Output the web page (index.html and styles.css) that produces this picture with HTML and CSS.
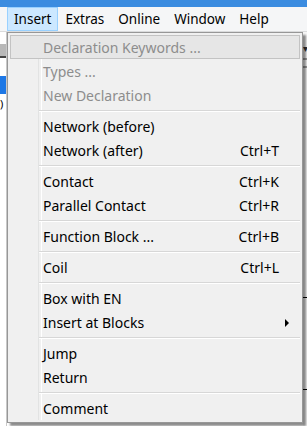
FILE: index.html
```html
<!DOCTYPE html>
<html lang="en">
<head>
  <meta charset="UTF-8" />
  <title>Insert menu</title>
  <link rel="stylesheet" href="styles.css">
</head>
<body>
  <div class="window">
    <div class="titlebar"></div>
    <div class="menubar">
      <span class="menubar-item active">Insert</span>
      <span class="menubar-item">Extras</span>
      <span class="menubar-item">Online</span>
      <span class="menubar-item">Window</span>
      <span class="menubar-item">Help</span>
    </div>

    <div class="workspace">
      <div class="bg-left">
        <div class="bg-icon"></div>
        <div class="bg-blue"></div>
        <div class="bg-paren">)</div>
      </div>
      <div class="bg-right">
        <div class="bg-arrow">▾</div>
        <div class="bg-rule"></div>
        <div class="bg-rule"></div>
        <div class="bg-tick t1"></div>
        <div class="bg-tick t2"></div>
      </div>

      <div class="dropdown">
        <div class="menu-item disabled hover"><span>Declaration Keywords ...</span></div>
        <div class="menu-item disabled"><span>Types ...</span></div>
        <div class="menu-item disabled"><span>New Declaration</span></div>
        <div class="separator"></div>
        <div class="menu-item"><span>Network (before)</span></div>
        <div class="menu-item"><span>Network (after)</span><span class="shortcut">Ctrl+T</span></div>
        <div class="separator"></div>
        <div class="menu-item"><span>Contact</span><span class="shortcut">Ctrl+K</span></div>
        <div class="menu-item"><span>Parallel Contact</span><span class="shortcut">Ctrl+R</span></div>
        <div class="separator"></div>
        <div class="menu-item"><span>Function Block ...</span><span class="shortcut">Ctrl+B</span></div>
        <div class="separator"></div>
        <div class="menu-item"><span>Coil</span><span class="shortcut">Ctrl+L</span></div>
        <div class="separator"></div>
        <div class="menu-item"><span>Box with EN</span></div>
        <div class="menu-item submenu"><span>Insert at Blocks</span></div>
        <div class="separator"></div>
        <div class="menu-item"><span>Jump</span></div>
        <div class="menu-item"><span>Return</span></div>
        <div class="separator"></div>
        <div class="menu-item"><span>Comment</span></div>
      </div>
    </div>
  </div>
</body>
</html>
```

FILE: styles.css
```css
* {
  margin: 0;
  padding: 0;
  box-sizing: border-box;
}

body {
  font-family: 'Noto Sans', 'Open Sans', sans-serif;
  font-size: 14px;
  color: #000;
  background: #fff;
  width: 307px;
  height: 426px;
  overflow: hidden;
}

.window {
  width: 307px;
  height: 426px;
  display: flex;
  flex-direction: column;
}

.titlebar {
  height: 7px;
  background: #3b8ce0;
}

.menubar {
  height: 25px;
  background: #f5f6f7;
  display: flex;
  align-items: stretch;
  padding-left: 7px;
  border-bottom: 1px solid #dadbdc;
  font-size: 13.5px;
}

.menubar-item {
  display: flex;
  align-items: center;
  padding: 0 6px;
  border: 1px solid transparent;
}

.menubar-item.active {
  background: #cce8ff;
  border-color: #99d1ff;
}

.workspace {
  flex: 1;
  position: relative;
  background: #fff;
}

/* bits of the window behind the menu */
.bg-left {
  position: absolute;
  left: 0;
  top: 0;
  width: 7px;
  height: 100%;
  border-right: 1px solid #c8c8c8;
}

.bg-icon {
  margin-top: 12px;
  height: 14px;
  background: #b8b8b8;
  border-bottom: 2px solid #444;
}

.bg-blue {
  margin-top: 18px;
  height: 18px;
  background: #1e78e6;
}

.bg-paren {
  margin-top: 4px;
  font-size: 11px;
  line-height: 12px;
}

.bg-right {
  position: absolute;
  right: 0;
  top: 0;
  width: 4px;
  height: 100%;
  background: #f6f6f6;
}

.bg-arrow {
  margin-top: 12px;
  font-size: 10px;
  line-height: 8px;
  color: #333;
}

.bg-rule {
  margin-top: 6px;
  height: 2px;
  background: #a0a0a0;
}

.bg-tick {
  position: absolute;
  right: 0;
  width: 4px;
  height: 1px;
  background: #000;
}

.t1 { top: 265px; }
.t2 { top: 357px; }

.dropdown {
  position: absolute;
  left: 7px;
  top: 0;
  width: 296px;
  padding: 2px;
  background: #f0f0f0;
  border: 1px solid #979797;
  box-shadow: 3px 3px 2px rgba(0, 0, 0, 0.45);
}

.dropdown::before {
  content: '';
  position: absolute;
  left: 30px;
  top: 2px;
  bottom: 2px;
  width: 2px;
  border-left: 1px solid #e2e3e3;
  border-right: 1px solid #fff;
}

.menu-item {
  position: relative;
  height: 24px;
  display: flex;
  align-items: center;
  justify-content: space-between;
  padding: 0 20px 0 32px;
  border: 1px solid transparent;
}

.menu-item.disabled {
  color: #8d8d8d;
}

.menu-item.hover {
  background: #e6e6e6;
  border-color: #c3c3c3;
  z-index: 1;
}

.submenu::after {
  content: '';
  position: absolute;
  right: 10px;
  top: 8px;
  border-left: 4px solid #000;
  border-top: 4px solid transparent;
  border-bottom: 4px solid transparent;
}

.separator {
  position: relative;
  height: 7px;
  margin-left: 29px;
}

.separator::after {
  content: '';
  position: absolute;
  left: 0;
  right: 0;
  top: 3px;
  border-top: 1px solid #d7d7d7;
  border-bottom: 1px solid #fff;
}
```
